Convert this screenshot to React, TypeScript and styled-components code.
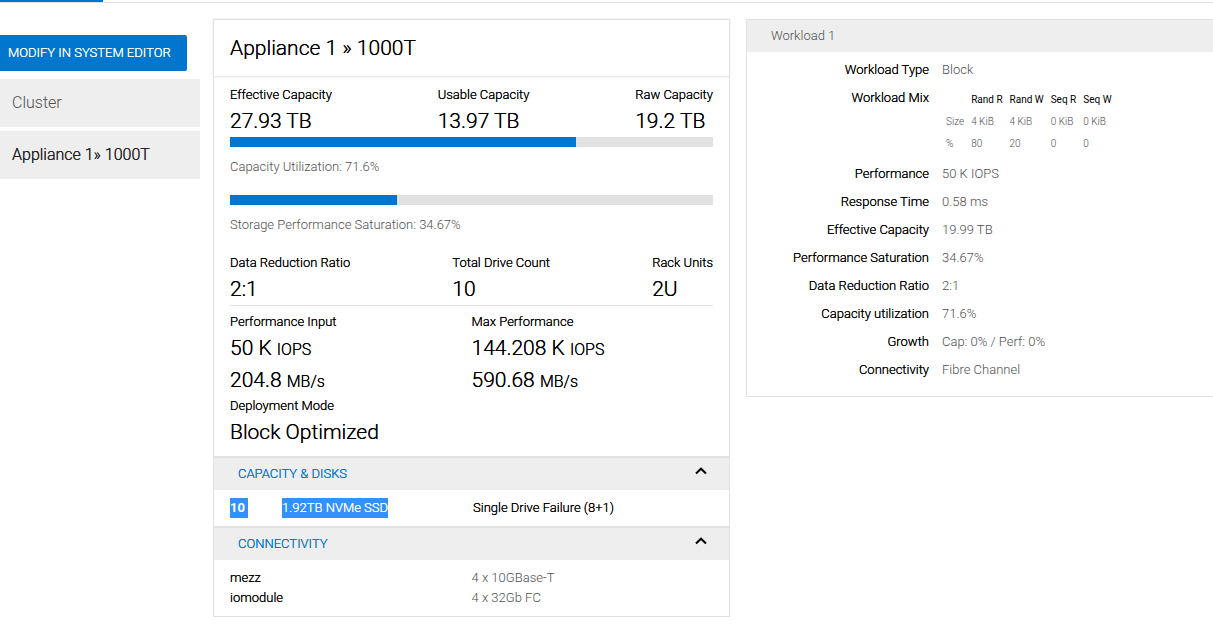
import React from 'react';
import styled, { createGlobalStyle } from 'styled-components';

const blue = '#0076ce';
const line = '#e2e2e2';
const shade = '#eeeeee';
const ink = '#000';
const muted = '#505050';
const heavier = '0 0 currentColor';

const GlobalStyle = createGlobalStyle`
  *, *::before, *::after { box-sizing: border-box; }
  body {
    margin: 0;
    background: #fff;
    color: ${ink};
    font: 300 13px/20px Roboto, "Liberation Sans", sans-serif;
  }
`;

const TabStrip = styled.div`
  height: 3px;
  border-bottom: 1px solid ${line};
`;

const ActiveTab = styled.div`
  width: 103px;
  height: 2px;
  background: ${blue};
`;

const Page = styled.main`
  display: grid;
  grid-template-columns: 200px minmax(0, 530fr) minmax(0, 483fr);
  align-items: start;
  margin-top: 16px;
`;

const Sidebar = styled.nav`
  padding-top: 16px;
`;

const EditButton = styled.button`
  display: block;
  width: 187px;
  height: 36px;
  margin: 0 0 8px;
  padding: 0 16px 0 8px;
  border: 0;
  border-radius: 0 2px 2px 0;
  background: ${blue};
  color: #fff;
  font: inherit;
  text-shadow: ${heavier};
  text-align: left;
  white-space: nowrap;
  cursor: pointer;
`;

const NavLink = styled.a<{ $current?: boolean }>`
  display: block;
  margin-bottom: 4px;
  padding: 12px;
  background: ${shade};
  color: ${(p) => (p.$current ? '#222' : muted)};
  font-size: 16px;
  line-height: 24px;
  text-shadow: ${(p) => (p.$current ? heavier : 'none')};
  text-decoration: none;
`;

const Panel = styled.section`
  border: 1px solid ${line};
`;

const AppliancePanel = styled(Panel)`
  margin-left: 13px;
`;

const WorkloadPanel = styled(Panel)`
  margin-left: 16px;
  border-right: 0;
  padding-bottom: 8px;
`;

const Title = styled.h1`
  margin: 0;
  padding: 12px 16px;
  font-size: 21px;
  line-height: 32px;
  font-weight: 300;
  text-shadow: ${heavier};
  box-shadow: 0 0 2px 1px ${line};
`;

const Summary = styled.div`
  padding: 9px 16px 8px;
`;

const Stats = styled.dl<{ $ruled?: boolean }>`
  display: flex;
  justify-content: space-between;
  margin: 0;
  border-bottom: ${(p) => (p.$ruled ? `1px solid ${line}` : '0')};
`;

const Pair = styled.dl`
  display: grid;
  grid-template-columns: 1fr 1fr;
  margin: 0;
  padding-top: 6px;
`;

const StatLabel = styled.dt`
  text-shadow: ${heavier};
`;

const StatValue = styled.dd`
  margin: 0;
  font-size: 21px;
  line-height: 32px;
  text-shadow: ${heavier};
`;

const Unit = styled.span`
  font-size: 16px;
  line-height: 16px;
`;

const Track = styled.div`
  height: 10px;
  background: ${line};
`;

const Fill = styled.div`
  height: 10px;
  background: ${blue};
`;

const Caption = styled.p`
  margin: 10px 0 18px;
  color: ${muted};
`;

const SectionButton = styled.button`
  display: flex;
  align-items: flex-start;
  justify-content: space-between;
  width: 100%;
  padding: 6px 22px 6px 24px;
  border: 0;
  border-top: 2px solid ${line};
  background: ${shade};
  color: ${blue};
  font: inherit;
  text-shadow: ${heavier};
  cursor: pointer;
`;

const DiskRow = styled.div`
  display: grid;
  grid-template-columns: 52px minmax(0, 191px) 1fr;
  padding: 8px 16px;
  text-shadow: ${heavier};
`;

const Marked = styled.span<{ $strong?: boolean }>`
  justify-self: start;
  padding-right: ${(p) => (p.$strong ? 3 : 0)}px;
  background: #3390ff;
  color: #fff;
  font-weight: ${(p) => (p.$strong ? 700 : 300)};
  text-shadow: ${(p) => (p.$strong ? 'none' : heavier)};
`;

const Ports = styled.dl`
  display: grid;
  grid-template-columns: 1fr 1fr;
  margin: 0;
  padding: 8px 16px;
`;

const Detail = styled.dd`
  margin: 0;
  color: ${muted};
`;

const WorkloadTitle = styled.h2`
  margin: 0;
  padding: 6px 24px;
  background: ${shade};
  color: ${muted};
  font: inherit;
`;

const Facts = styled.dl`
  display: grid;
  grid-template-columns: 182px 1fr;
  column-gap: 13px;
  row-gap: 8px;
  margin: 0;
  padding: 8px 0;
`;

const FactLabel = styled(StatLabel)`
  text-align: right;
`;

const MixTable = styled.table`
  margin: 1px 0;
  border-collapse: collapse;
  font-size: 10px;
  line-height: 22px;

  th, td {
    padding: 0 3px 0 4px;
    text-align: left;
    font-weight: 300;
  }

  thead th {
    font-weight: 400;
    color: ${ink};
  }
`;

const Stat = ({ label, children }: { label: string; children: React.ReactNode }) => (
  <div>
    <StatLabel>{label}</StatLabel>
    {children}
  </div>
);

const Chevron = () => (
  <svg width="12" height="14" viewBox="0 0 12 14" fill="none" aria-hidden="true">
    <path d="M1 9.5 6 4.7l5 4.8" stroke="#000" strokeWidth="2" />
  </svg>
);

const Meter = ({ label, value }: { label: string; value: number }) => (
  <>
    <Track role="progressbar" aria-label={label} aria-valuenow={value}>
      <Fill style={{ width: `${value}%` }} />
    </Track>
    <Caption>
      {label}: {value}%
    </Caption>
  </>
);

const facts = [
  ['Performance', '50 K IOPS'],
  ['Response Time', '0.58 ms'],
  ['Effective Capacity', '19.99 TB'],
  ['Performance Saturation', '34.67%'],
  ['Data Reduction Ratio', '2:1'],
  ['Capacity utilization', '71.6%'],
  ['Growth', 'Cap: 0% / Perf: 0%'],
  ['Connectivity', 'Fibre Channel'],
];

export default function App() {
  return (
    <>
      <GlobalStyle />
      <TabStrip>
        <ActiveTab />
      </TabStrip>
      <Page>
        <Sidebar>
          <EditButton type="button">MODIFY IN SYSTEM EDITOR</EditButton>
          <NavLink href="#cluster">Cluster</NavLink>
          <NavLink href="#appliance" $current aria-current="page">
            Appliance 1» 1000T
          </NavLink>
        </Sidebar>

        <AppliancePanel>
          <Title>Appliance 1 » 1000T</Title>
          <Summary>
            <Stats>
              <Stat label="Effective Capacity"><StatValue>27.93 TB</StatValue></Stat>
              <Stat label="Usable Capacity"><StatValue>13.97 TB</StatValue></Stat>
              <Stat label="Raw Capacity"><StatValue>19.2 TB</StatValue></Stat>
            </Stats>
            <Meter label="Capacity Utilization" value={71.6} />
            <Meter label="Storage Performance Saturation" value={34.67} />
            <Stats $ruled>
              <Stat label="Data Reduction Ratio"><StatValue>2:1</StatValue></Stat>
              <Stat label="Total Drive Count"><StatValue>10</StatValue></Stat>
              <Stat label="Rack Units"><StatValue>2U</StatValue></Stat>
            </Stats>
            <Pair>
              <Stat label="Performance Input">
                <StatValue>50 K <Unit>IOPS</Unit></StatValue>
                <StatValue>204.8 <Unit>MB/s</Unit></StatValue>
              </Stat>
              <Stat label="Max Performance">
                <StatValue>144.208 K <Unit>IOPS</Unit></StatValue>
                <StatValue>590.68 <Unit>MB/s</Unit></StatValue>
              </Stat>
              <Stat label="Deployment Mode"><StatValue>Block Optimized</StatValue></Stat>
            </Pair>
          </Summary>

          <SectionButton type="button" aria-expanded="true">
            CAPACITY &amp; DISKS
            <Chevron />
          </SectionButton>
          <DiskRow>
            <Marked $strong>10</Marked>
            <Marked>1.92TB NVMe SSD</Marked>
            <span>Single Drive Failure (8+1)</span>
          </DiskRow>

          <SectionButton type="button" aria-expanded="true">
            CONNECTIVITY
            <Chevron />
          </SectionButton>
          <Ports>
            <StatLabel>mezz</StatLabel>
            <Detail>4 x 10GBase-T</Detail>
            <StatLabel>iomodule</StatLabel>
            <Detail>4 x 32Gb FC</Detail>
          </Ports>
        </AppliancePanel>

        <WorkloadPanel>
          <WorkloadTitle>Workload 1</WorkloadTitle>
          <Facts>
            <FactLabel>Workload Type</FactLabel>
            <Detail>Block</Detail>
            <FactLabel>Workload Mix</FactLabel>
            <Detail>
              <MixTable>
                <thead>
                  <tr>
                    <td />
                    <th scope="col">Rand R</th>
                    <th scope="col">Rand W</th>
                    <th scope="col">Seq R</th>
                    <th scope="col">Seq W</th>
                  </tr>
                </thead>
                <tbody>
                  <tr>
                    <th scope="row">Size</th>
                    <td>4 KiB</td>
                    <td>4 KiB</td>
                    <td>0 KiB</td>
                    <td>0 KiB</td>
                  </tr>
                  <tr>
                    <th scope="row">%</th>
                    <td>80</td>
                    <td>20</td>
                    <td>0</td>
                    <td>0</td>
                  </tr>
                </tbody>
              </MixTable>
            </Detail>
            {facts.map(([label, value]) => (
              <React.Fragment key={label}>
                <FactLabel>{label}</FactLabel>
                <Detail>{value}</Detail>
              </React.Fragment>
            ))}
          </Facts>
        </WorkloadPanel>
      </Page>
    </>
  );
}
